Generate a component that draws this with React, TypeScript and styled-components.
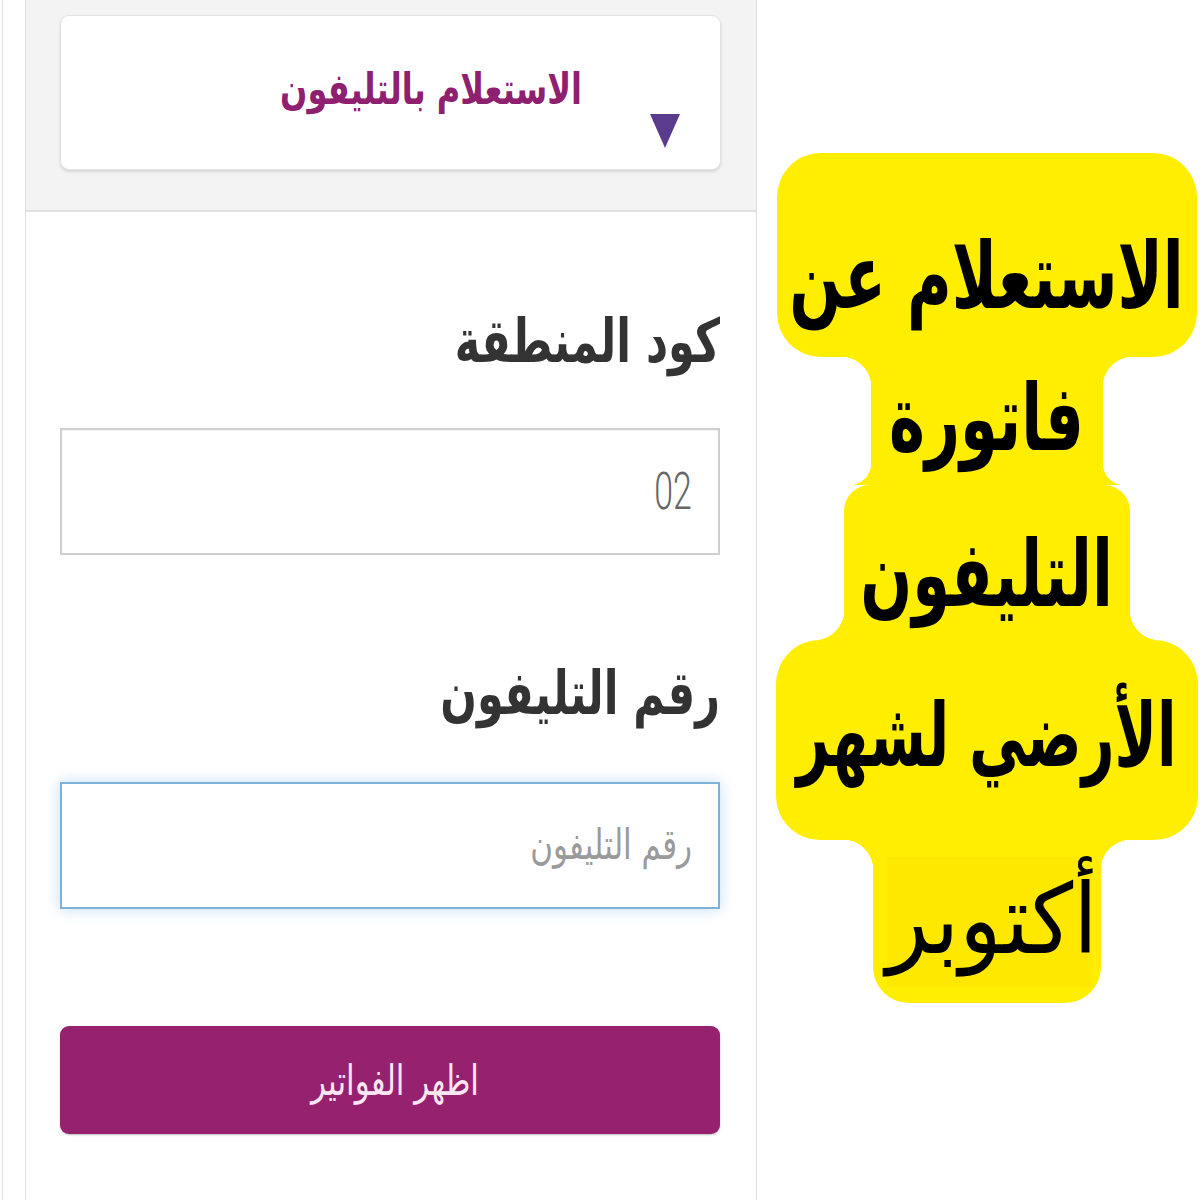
import React from "react";
import styled, { createGlobalStyle } from "styled-components";

const GlobalStyle = createGlobalStyle`
  html, body {
    margin: 0;
    padding: 0;
    background: #ffffff;
  }
  body {
    font-family: "DejaVu Sans", "Noto Sans", sans-serif;
  }
`;

const arabic = `"DejaVu Sans", "Noto Sans", sans-serif`;
const yellow = "#ffee00";

const Page = styled.div`
  width: 1200px;
  height: 1200px;
  display: flex;
  overflow: hidden;
  background: #ffffff;
`;

const Frame = styled.div`
  margin-left: 2px;
  padding-left: 22px;
  border-left: 1px solid #e2e2e2;
  display: flex;
`;

const Panel = styled.div`
  width: 730px;
  border-left: 1px solid #dedede;
  border-right: 1px solid #dedede;
  display: flex;
  flex-direction: column;
  direction: rtl;
`;

const SelectArea = styled.div`
  background: #f3f3f3;
  padding: 15px 35px 40px 34px;
  border-bottom: 2px solid #e0e0e0;
`;

const SelectBox = styled.div`
  height: 153px;
  background: #ffffff;
  border: 1px solid #e2e2e2;
  border-radius: 9px;
  box-shadow: 0 2px 3px rgba(0, 0, 0, 0.12);
  display: flex;
  align-items: center;
  padding-right: 138px;
  padding-left: 42px;
  position: relative;
`;

/* the reference uses a tall, condensed Arabic face: stretch DejaVu vertically */
const Tall = styled.span<{ $y?: number }>`
  display: inline-block;
  transform: scaleY(${(p) => p.$y ?? 1.35});
  white-space: nowrap;
`;

const SelectText = styled(Tall)`
  font-family: ${arabic};
  font-size: 32px;
  font-weight: bold;
  color: #8e206f;
  margin-top: -8px;
`;

const Caret = styled.svg`
  position: absolute;
  left: 588px;
  top: 97px;
`;

const Form = styled.div`
  padding: 84px 36px 0 34px;
  display: flex;
  flex-direction: column;
`;

const Label = styled.div<{ $gap: number }>`
  font-family: ${arabic};
  font-size: 43px;
  font-weight: bold;
  color: #333333;
  line-height: 90px;
  margin-bottom: ${(p) => p.$gap}px;
`;

const Field = styled.div<{ $focused?: boolean }>`
  height: 127px;
  box-sizing: border-box;
  border: 2px solid ${(p) => (p.$focused ? "#7eb1d6" : "#cfcfcf")};
  box-shadow: ${(p) =>
    p.$focused
      ? "0 0 14px rgba(120, 180, 230, 0.45)"
      : "inset 0 1px 2px rgba(0,0,0,0.06)"};
  background: #ffffff;
  display: flex;
  align-items: center;
  padding-right: 26px;
  margin-bottom: ${(p) => (p.$focused ? 117 : 93)}px;
`;

const Value = styled.span`
  font-family: Roboto, "Noto Sans", sans-serif;
  font-weight: 300;
  font-size: 52px;
  color: #666666;
  display: inline-block;
  transform: scaleX(0.65);
  transform-origin: right center;
`;

const Placeholder = styled(Tall)`
  font-family: ${arabic};
  font-size: 31px;
  color: #9a9a9a;
  margin-top: -4px;
`;

const SubmitButton = styled.div`
  height: 108px;
  background: #96216f;
  border-radius: 9px;
  box-shadow: 0 1px 2px rgba(0, 0, 0, 0.25);
  display: flex;
  align-items: center;
  justify-content: center;
`;

const ButtonText = styled(Tall)`
  font-family: ${arabic};
  font-size: 31px;
  color: #fbe6f3;
  margin-left: 10px;
`;

const Poster = styled.div`
  flex: 1;
  padding-top: 153px;
  padding-left: 16px;
  display: flex;
  flex-direction: column;
  align-items: center;
  direction: rtl;
`;

const Strip = styled.div<{
  $w: number;
  $h: number;
  $radius?: string;
  $top?: number;
  $bottom?: number;
}>`
  flex: none;
  width: ${(p) => p.$w}px;
  height: ${(p) => p.$h}px;
  background: ${yellow};
  border-radius: ${(p) => p.$radius ?? "44px"};
  display: flex;
  align-items: center;
  justify-content: center;
  position: relative;

  &::before,
  &::after {
    content: "";
    position: absolute;
    left: -${(p) => p.$top ?? 0}px;
    right: -${(p) => p.$top ?? 0}px;
    height: ${(p) => p.$top ?? 0}px;
    top: 0;
    background:
      radial-gradient(circle at 0 100%, transparent ${(p) => p.$top ?? 0}px, ${yellow} ${(p) => (p.$top ?? 0) + 0.5}px) left top / ${(p) => p.$top ?? 0}px ${(p) => p.$top ?? 0}px no-repeat,
      radial-gradient(circle at 100% 100%, transparent ${(p) => p.$top ?? 0}px, ${yellow} ${(p) => (p.$top ?? 0) + 0.5}px) right top / ${(p) => p.$top ?? 0}px ${(p) => p.$top ?? 0}px no-repeat;
  }

  &::after {
    top: auto;
    bottom: 0;
    left: -${(p) => p.$bottom ?? 0}px;
    right: -${(p) => p.$bottom ?? 0}px;
    height: ${(p) => p.$bottom ?? 0}px;
    background:
      radial-gradient(circle at 0 0, transparent ${(p) => p.$bottom ?? 0}px, ${yellow} ${(p) => (p.$bottom ?? 0) + 0.5}px) left bottom / ${(p) => p.$bottom ?? 0}px ${(p) => p.$bottom ?? 0}px no-repeat,
      radial-gradient(circle at 100% 0, transparent ${(p) => p.$bottom ?? 0}px, ${yellow} ${(p) => (p.$bottom ?? 0) + 0.5}px) right bottom / ${(p) => p.$bottom ?? 0}px ${(p) => p.$bottom ?? 0}px no-repeat;
  }
`;

const Headline = styled(Tall)<{ $shift?: number; $size?: number }>`
  font-family: ${arabic};
  font-weight: bold;
  font-size: ${(p) => p.$size ?? 61}px;
  color: #000000;
  margin-top: ${(p) => p.$shift ?? 0}px;
  position: relative;
  z-index: 1;
`;

const MonthBox = styled.div`
  width: 204px;
  height: 130px;
  margin-right: -5px;
  background: #ffe800;
  display: flex;
  align-items: center;
  justify-content: center;
`;

const Month = styled(Tall)`
  font-family: ${arabic};
  font-size: 88px;
  color: #000000;
  margin-top: -4px;
  margin-left: 6px;
`;

export default function App() {
  return (
    <Page>
      <GlobalStyle />
      <Frame>
        <Panel>
          <SelectArea>
            <SelectBox>
              <SelectText>الاستعلام بالتليفون</SelectText>
              <Caret width="32" height="36" viewBox="0 0 32 36">
                <path d="M1 1 L31 1 L16 35 Z" fill="#5b3b8e" />
              </Caret>
            </SelectBox>
          </SelectArea>
          <Form>
            <Label $gap={42}>
              <Tall $y={1.4}>كود المنطقة</Tall>
            </Label>
            <Field>
              <Value>02</Value>
            </Field>
            <Label $gap={44}>
              <Tall $y={1.4}>رقم التليفون</Tall>
            </Label>
            <Field $focused>
              <Placeholder>رقم التليفون</Placeholder>
            </Field>
            <SubmitButton>
              <ButtonText>اظهر الفواتير</ButtonText>
            </SubmitButton>
          </Form>
        </Panel>
      </Frame>
      <Poster>
        <Strip $w={420} $h={204}>
          <Headline $y={1.5} $shift={40}>الاستعلام عن</Headline>
        </Strip>
        <Strip $w={232} $h={128} $radius="0" $top={30} $bottom={22}>
          <Headline $y={1.5} $shift={-8}>فاتورة</Headline>
        </Strip>
        <Strip $w={286} $h={155} $radius="26px 26px 0 0" $bottom={30}>
          <Headline $y={1.5} $shift={22}>التليفون</Headline>
        </Strip>
        <Strip $w={422} $h={200}>
          <Headline $y={1.55} $size={57} $shift={-10}>الأرضي لشهر</Headline>
        </Strip>
        <Strip $w={228} $h={163} $radius="0 0 36px 36px" $top={30}>
          <MonthBox>
            <Month $y={1.1}>أكتوبر</Month>
          </MonthBox>
        </Strip>
      </Poster>
    </Page>
  );
}
